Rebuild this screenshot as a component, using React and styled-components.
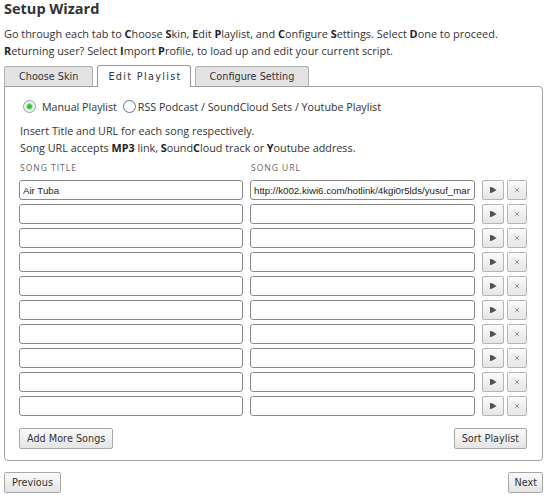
import React from 'react';
import styled, { createGlobalStyle } from 'styled-components';

const Global = createGlobalStyle`
  body {
    margin: 0;
    background: #fff;
    color: #333;
    font-family: "Open Sans", "DejaVu Sans", sans-serif;
  }
`;

const Page = styled.div`
  width: 539px;
  padding: 0 4px;
`;

const Title = styled.h1`
  margin: 0;
  font-size: 14.5px;
  line-height: 18px;
  font-weight: 700;
  color: #333;
`;

const Intro = styled.p`
  margin: 7px 0 0;
  font-size: 10.9px;
  line-height: 17px;
  color: #333;
  b { color: #222; }
`;

const TabBar = styled.div`
  display: flex;
  align-items: flex-end;
  gap: 4px;
  margin-top: 6px;
`;

const Tab = styled.div`
  position: relative;
  z-index: ${p => (p.$active ? 1 : 0)};
  box-sizing: border-box;
  height: ${p => (p.$active ? 22 : 20)}px;
  margin-bottom: ${p => (p.$active ? -1 : 0)}px;
  padding: ${p => (p.$active ? '0 8px 0 10px' : '0 14px')};
  display: flex;
  align-items: center;
  border: 1px solid ${p => (p.$active ? '#999' : '#b0b0b0')};
  border-bottom: none;
  border-radius: 3px 3px 0 0;
  background: ${p => (p.$active ? '#fff' : '#e3e3e3')};
  font-family: "DejaVu Sans", sans-serif;
  font-size: 9.7px;
  letter-spacing: ${p => (p.$active ? '1.3px' : '0')};
  color: #333;
  white-space: nowrap;
`;

const Panel = styled.div`
  border: 1px solid #a0a0a0;
  border-radius: 0 4px 4px 4px;
  padding: 11px 15px 11px 14px;
`;

const RadioRow = styled.div`
  display: flex;
  align-items: center;
  height: 17px;
  font-size: 10.7px;
  padding-left: 4px;
`;

const RadioOption = styled.label`
  display: flex;
  align-items: center;
  gap: ${p => p.$gap}px;
  margin-right: 6px;
  color: #333;
`;

const RadioDot = styled.span`
  box-sizing: border-box;
  width: 13px;
  height: 13px;
  border-radius: 50%;
  border: 1px solid ${p => (p.$checked ? '#8fa0b0' : '#4f78a8')};
  background: ${p =>
    p.$checked
      ? 'radial-gradient(circle, #2fc23a 0, #2fc23a 1.8px, #a8e6ab 3px, #f4f6f8 4px, #e2e6ea 100%)'
      : 'radial-gradient(circle, #fff 0, #fff 55%, #e6ebf2 100%)'};
`;

const Instructions = styled.p`
  margin: 7px 0 0;
  font-size: 10.8px;
  line-height: 17px;
  padding-left: 1px;
  color: #333;
  b { color: #222; }
`;

const SongGrid = styled.div`
  display: grid;
  grid-template-columns: 224px 225px 45px;
  column-gap: 7px;
`;

const ColLabel = styled.div`
  margin-top: 5px;
  font-size: 8.5px;
  line-height: 14px;
  letter-spacing: 1px;
  color: #666;
  padding-left: 1px;
`;

const Rows = styled.div`
  display: flex;
  flex-direction: column;
  gap: 4px;
  margin-top: 5px;
`;

const TextField = styled.input`
  box-sizing: border-box;
  width: 100%;
  height: 20px;
  margin: 0;
  padding: 0 3px;
  border: 1px solid #8a8a8a;
  border-radius: 3px;
  background: #fff;
  font-family: "Liberation Sans", Arial, sans-serif;
  font-size: 9.7px;
  color: #222;
  outline: none;
`;

const IconPair = styled.div`
  display: flex;
  gap: 3px;
`;

const IconButton = styled.button`
  box-sizing: border-box;
  width: ${p => p.$w}px;
  height: 20px;
  padding: 0;
  margin: 0;
  display: flex;
  align-items: center;
  justify-content: center;
  border: 1px solid #b4b4b4;
  border-radius: 2px;
  background: linear-gradient(#fbfbfb, #e6e6e6);
`;

const Button = styled.button`
  box-sizing: border-box;
  height: 21px;
  margin: 0;
  padding: ${p => (p.$compact ? '0 5px' : '0 7px')};
  border: 1px solid #a8a8a8;
  border-radius: 2px;
  background: linear-gradient(#fafafa, #e4e4e4);
  font-family: "DejaVu Sans", sans-serif;
  font-size: 9.7px;
  color: #333;
`;

const Actions = styled.div`
  display: flex;
  justify-content: space-between;
  margin-top: 12px;
`;

const Nav = styled.div`
  display: flex;
  justify-content: space-between;
  margin-top: 11px;
`;

const PlayIcon = () => (
  <svg width="7" height="6" viewBox="0 0 7 6">
    <polygon points="0,0 2,0.3 6.5,3 2,5.7 0,6" fill="#505050" />
  </svg>
);

const CloseIcon = () => (
  <svg width="6" height="6" viewBox="0 0 6 6">
    <path d="M0.8 0.8 L5.2 5.2 M5.2 0.8 L0.8 5.2" stroke="#888" strokeWidth="0.9" />
  </svg>
);

const songs = [
  { title: 'Air Tuba', url: 'http://k002.kiwi6.com/hotlink/4kgi0r5lds/yusuf_mar' },
  ...Array.from({ length: 9 }, () => ({ title: '', url: '' })),
];

export default function App() {
  return (
    <>
      <Global />
      <Page>
        <Title>Setup Wizard</Title>
        <Intro>
          Go through each tab to <b>C</b>hoose <b>S</b>kin, <b>E</b>dit <b>P</b>laylist, and{' '}
          <b>C</b>onfigure <b>S</b>ettings. Select <b>D</b>one to proceed.
          <br />
          <b>R</b>eturning user? Select <b>I</b>mport <b>P</b>rofile, to load up and edit your current script.
        </Intro>
        <TabBar>
          <Tab>Choose Skin</Tab>
          <Tab $active>Edit Playlist</Tab>
          <Tab>Configure Setting</Tab>
        </TabBar>
        <Panel>
          <RadioRow>
            <RadioOption $gap={6}>
              <RadioDot $checked />
              Manual Playlist
            </RadioOption>
            <RadioOption $gap={2}>
              <RadioDot />
              RSS Podcast / SoundCloud Sets / Youtube Playlist
            </RadioOption>
          </RadioRow>
          <Instructions>
            Insert Title and URL for each song respectively.
            <br />
            Song URL accepts <b>MP3</b> link, <b>S</b>ound<b>C</b>loud track or <b>Y</b>outube address.
          </Instructions>
          <SongGrid>
            <ColLabel>SONG TITLE</ColLabel>
            <ColLabel>SONG URL</ColLabel>
          </SongGrid>
          <Rows>
            {songs.map((s, i) => (
              <SongGrid key={i}>
                <TextField defaultValue={s.title} />
                <TextField defaultValue={s.url} />
                <IconPair>
                  <IconButton $w={22}>
                    <PlayIcon />
                  </IconButton>
                  <IconButton $w={20}>
                    <CloseIcon />
                  </IconButton>
                </IconPair>
              </SongGrid>
            ))}
          </Rows>
          <Actions>
            <Button>Add More Songs</Button>
            <Button>Sort Playlist</Button>
          </Actions>
        </Panel>
        <Nav>
          <Button>Previous</Button>
          <Button $compact>Next</Button>
        </Nav>
      </Page>
    </>
  );
}
